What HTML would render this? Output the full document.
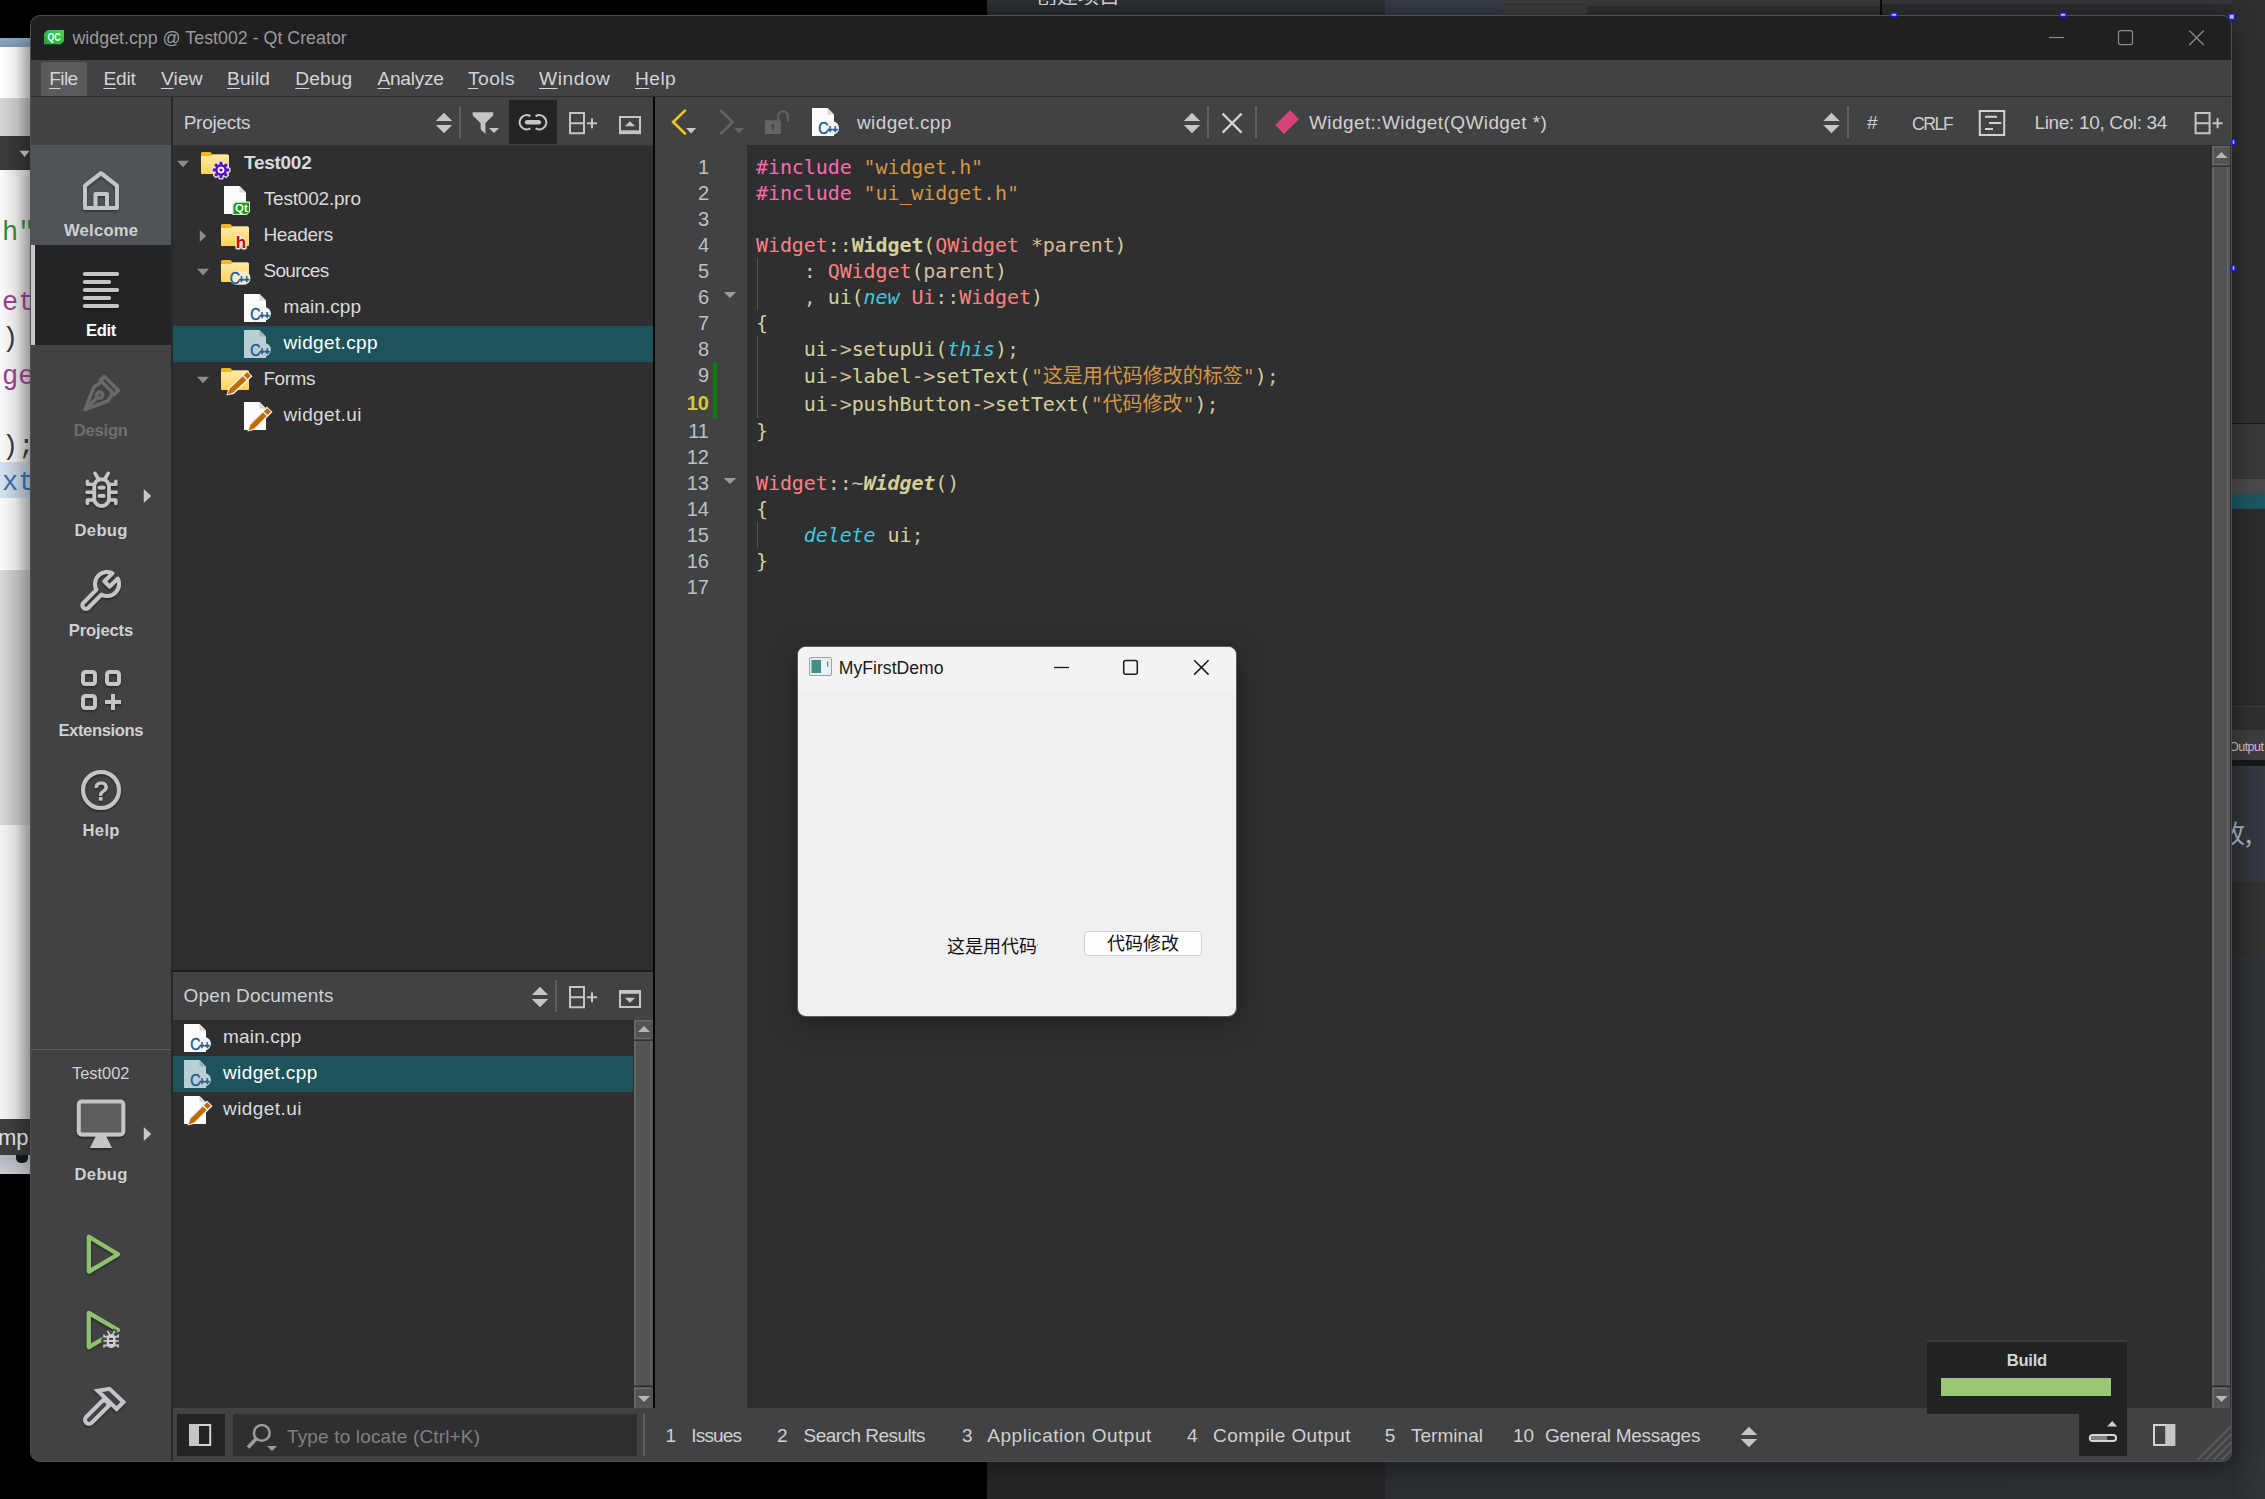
<!DOCTYPE html>
<html lang="en"><head><meta charset="utf-8"><title>widget.cpp @ Test002 - Qt Creator</title>
<style>

html,body{margin:0;padding:0;}
body{width:2265px;height:1499px;overflow:hidden;background:#000;position:relative;font-family:"Liberation Sans","Noto Sans CJK SC",sans-serif;}
div{position:absolute;white-space:nowrap;box-sizing:border-box;}
svg{position:absolute;left:0;top:0;overflow:visible;}
.code{font-family:"DejaVu Sans Mono","Liberation Mono","Noto Sans CJK SC",monospace;font-size:20px;letter-spacing:-0.09px;color:#d6cf9a;white-space:pre;}
.code span.cj{font-family:"Noto Sans CJK SC",sans-serif;letter-spacing:0;}
.kw{color:#45c6d6;font-style:italic;}
.ty{color:#ff8080;}
.pp{color:#ff6aad;}
.st{color:#d69545;}
.pu{color:#d6bb9a;}
.fn{font-weight:bold;}
u{text-decoration:underline;text-underline-offset:3px;text-decoration-thickness:1px;}

</style></head>
<body>
<div style="left:987px;top:0px;width:1278px;height:1499px;background:#2e3032;"></div>
<div style="left:987px;top:0px;width:398px;height:15px;background:linear-gradient(180deg,#2e3136,#25272b);"></div>
<div style="left:1385px;top:0px;width:118px;height:15px;background:linear-gradient(180deg,#373d46,#30353d);"></div>
<div style="left:1503px;top:0px;width:84px;height:15px;background:#3a3b3d;"></div>
<div style="left:1503px;top:4px;width:84px;height:1px;background:#2e2f30;"></div>
<div style="left:1587px;top:0px;width:293px;height:6px;background:#38393b;"></div>
<div style="left:1587px;top:6px;width:293px;height:9px;background:#2c2d2f;"></div>
<div style="left:1880px;top:0px;width:2px;height:15px;background:#0c0c0c;"></div>
<div style="left:1882px;top:0px;width:383px;height:15px;background:#2a2b2d;"></div>
<div style="left:1882px;top:0px;width:383px;height:4px;background:#35363a;"></div>
<div style="left:1036px;top:-17px;height:22px;line-height:22px;font-size:21px;color:#d4d4d4;overflow:hidden;font-family:'Noto Sans CJK SC',sans-serif;">创建项目</div>
<div style="left:987px;top:1461px;width:398px;height:38px;background:#252628;"></div>
<div style="left:1385px;top:1461px;width:880px;height:38px;background:linear-gradient(90deg,#2b2e33,#2c2f33);"></div>
<div style="left:2232px;top:0px;width:33px;height:423px;background:#2d2f31;"></div>
<div style="left:2232px;top:423px;width:33px;height:1px;background:#17181a;"></div>
<div style="left:2232px;top:424px;width:33px;height:55px;background:#36383a;"></div>
<div style="left:2232px;top:479px;width:33px;height:15px;background:#47494b;"></div>
<div style="left:2232px;top:494px;width:33px;height:15px;background:#1d5560;"></div>
<div style="left:2232px;top:509px;width:33px;height:198px;background:#2a2b2d;"></div>
<div style="left:2232px;top:706px;width:33px;height:1px;background:#3c3d3f;"></div>
<div style="left:2232px;top:707px;width:33px;height:23px;background:#2d2e30;"></div>
<div style="left:2232px;top:730px;width:33px;height:30px;background:#3b3d3f;"></div>
<div style="left:2232px;top:760px;width:33px;height:6px;background:#161718;"></div>
<div style="left:2232px;top:766px;width:33px;height:116px;background:linear-gradient(90deg,#2e3237,#363b41);"></div>
<div style="left:2232px;top:882px;width:33px;height:74px;background:linear-gradient(90deg,#2b2b2b,#333333);"></div>
<div style="left:2232px;top:956px;width:33px;height:543px;background:linear-gradient(90deg,#2b2d31,#31353a);"></div>
<div style="left:2229px;top:738.63px;line-height:16px;font-size:12.6px;color:#c4c4c4;letter-spacing:-0.565px;">Output</div>
<div style="left:2220px;top:817.34px;line-height:30px;font-size:25px;color:#a9b4c0;font-family:'Noto Sans CJK SC',sans-serif;">改,</div>
<div style="left:0px;top:38px;width:30px;height:1136px;background:#fff;"></div>
<div style="left:0px;top:38px;width:30px;height:9px;background:linear-gradient(180deg,#8faac8,#7c95b2);"></div>
<div style="left:0px;top:47px;width:30px;height:51px;background:linear-gradient(90deg,#ffffff 0%,#f6f6f6 55%,#c9c9c9 100%);"></div>
<div style="left:0px;top:98px;width:30px;height:38px;background:linear-gradient(90deg,#d6d6d6 0%,#cccccc 55%,#ababab 100%);"></div>
<div style="left:0px;top:136px;width:30px;height:34px;background:linear-gradient(90deg,#3a3b3b,#323333);"></div>
<div style="left:0px;top:170px;width:30px;height:6px;background:linear-gradient(90deg,#ffffff,#d0d0d0);"></div>
<div style="left:0px;top:176px;width:30px;height:394px;background:linear-gradient(90deg,#fbfbfb 0%,#efefef 50%,#c2c2c2 100%);"></div>
<div style="left:0px;top:462px;width:30px;height:36px;background:linear-gradient(90deg,#d6e4f2,#b4c0cc);"></div>
<div style="left:0px;top:570px;width:30px;height:255px;background:linear-gradient(90deg,#d9d9d9,#b4b4b4);"></div>
<div style="left:0px;top:825px;width:30px;height:294px;background:linear-gradient(90deg,#f4f4f4 0%,#e9e9e9 50%,#b8b8b8 100%);"></div>
<div style="left:0px;top:1119px;width:30px;height:36px;background:linear-gradient(90deg,#404142,#37383a);"></div>
<div style="left:0px;top:1155px;width:30px;height:19px;background:linear-gradient(180deg,#aeb6bc,#c9cdd0);"></div>
<div style="left:16px;top:1155px;width:12px;height:8px;background:#15191d;border-radius:0 0 5px 5px;"></div>
<div style="left:2px;top:215.64px;line-height:34px;font-size:27px;color:#3a8a3a;font-family:'Liberation Mono','DejaVu Sans Mono',monospace;">h"</div>
<div style="left:2px;top:285.64px;line-height:34px;font-size:27px;color:#9b3f8f;font-family:'Liberation Mono','DejaVu Sans Mono',monospace;">et</div>
<div style="left:2px;top:321.64px;line-height:34px;font-size:27px;color:#3a3a3a;font-family:'Liberation Mono','DejaVu Sans Mono',monospace;">)</div>
<div style="left:2px;top:359.64px;line-height:34px;font-size:27px;color:#9b3f8f;font-family:'Liberation Mono','DejaVu Sans Mono',monospace;">ge</div>
<div style="left:2px;top:429.64px;line-height:34px;font-size:27px;color:#3a3a3a;font-family:'Liberation Mono','DejaVu Sans Mono',monospace;">);</div>
<div style="left:2px;top:465.64px;line-height:34px;font-size:27px;color:#3c6ea8;font-family:'Liberation Mono','DejaVu Sans Mono',monospace;">xt</div>
<div style="left:-2px;top:1123.98px;line-height:28px;font-size:22px;color:#e4e4e4;">mp</div>
<div style="left:30px;top:15px;width:2202px;height:1447px;background:#404244;border-radius:10px;border:1px solid #4e4f50;box-shadow:0 6px 28px rgba(0,0,0,.38);"></div>
<div style="left:31px;top:16px;width:2200px;height:44px;background:#202020;border-radius:9px 9px 0 0;"></div>
<div style="left:72.5px;top:22.83px;line-height:30px;font-size:17.8px;color:#9b9b9b;letter-spacing:0.016px;">widget.cpp @ Test002 - Qt Creator</div>
<div style="left:31px;top:60px;width:2200px;height:36px;background:#404244;"></div>
<div style="left:31px;top:96px;width:2200px;height:1px;background:#2b2c2d;"></div>
<div style="left:41px;top:62px;width:46px;height:34px;background:#595b5d;"></div>
<div style="left:49.3px;top:64.35px;line-height:30px;font-size:19.2px;color:#d4d4d4;letter-spacing:-0.680px;"><u>F</u>ile</div>
<div style="left:103.4px;top:64.35px;line-height:30px;font-size:19.2px;color:#d4d4d4;letter-spacing:-0.195px;"><u>E</u>dit</div>
<div style="left:161px;top:64.35px;line-height:30px;font-size:19.2px;color:#d4d4d4;letter-spacing:0.110px;"><u>V</u>iew</div>
<div style="left:227px;top:64.35px;line-height:30px;font-size:19.2px;color:#d4d4d4;letter-spacing:0.076px;"><u>B</u>uild</div>
<div style="left:295.3px;top:64.35px;line-height:30px;font-size:19.2px;color:#d4d4d4;letter-spacing:0.105px;"><u>D</u>ebug</div>
<div style="left:377.5px;top:64.35px;line-height:30px;font-size:19.2px;color:#d4d4d4;letter-spacing:-0.301px;"><u>A</u>nalyze</div>
<div style="left:468px;top:64.35px;line-height:30px;font-size:19.2px;color:#d4d4d4;letter-spacing:0.444px;"><u>T</u>ools</div>
<div style="left:539px;top:64.35px;line-height:30px;font-size:19.2px;color:#d4d4d4;letter-spacing:0.542px;"><u>W</u>indow</div>
<div style="left:635px;top:64.35px;line-height:30px;font-size:19.2px;color:#d4d4d4;letter-spacing:0.437px;"><u>H</u>elp</div>
<div style="left:31px;top:97px;width:140px;height:1364px;background:#404244;border-radius:0 0 0 9px;"></div>
<div style="left:31px;top:145px;width:140px;height:100px;background:#515456;"></div>
<div style="left:31px;top:245px;width:140px;height:100px;background:#222425;"></div>
<div style="left:31px;top:245px;width:4px;height:100px;background:#c8c8c8;"></div>
<div style="left:171px;top:97px;width:2px;height:1364px;background:#28292a;"></div>
<div style="left:64px;top:216.25px;line-height:30px;font-size:16.6px;color:#d0d0d0;letter-spacing:0.237px;font-weight:bold;">Welcome</div>
<div style="left:86px;top:316.25px;line-height:30px;font-size:16.6px;color:#ffffff;letter-spacing:-0.318px;font-weight:bold;">Edit</div>
<div style="left:73.8px;top:416.25px;line-height:30px;font-size:16.6px;color:#6e7072;letter-spacing:-0.229px;font-weight:bold;">Design</div>
<div style="left:74.5px;top:516.25px;line-height:30px;font-size:16.6px;color:#d0d0d0;letter-spacing:0.340px;font-weight:bold;">Debug</div>
<div style="left:68.8px;top:616.25px;line-height:30px;font-size:16.6px;color:#d0d0d0;letter-spacing:-0.159px;font-weight:bold;">Projects</div>
<div style="left:58.4px;top:716.25px;line-height:30px;font-size:16.6px;color:#d0d0d0;letter-spacing:-0.374px;font-weight:bold;">Extensions</div>
<div style="left:82.5px;top:816.25px;line-height:30px;font-size:16.6px;color:#d0d0d0;letter-spacing:0.342px;font-weight:bold;">Help</div>
<div style="left:31px;top:1049px;width:140px;height:1px;background:#5c5e60;"></div>
<div style="left:72px;top:1058.32px;line-height:30px;font-size:16.4px;color:#d0d0d0;letter-spacing:0.010px;">Test002</div>
<div style="left:74.5px;top:1160.25px;line-height:30px;font-size:16.6px;color:#d0d0d0;letter-spacing:0.340px;font-weight:bold;">Debug</div>
<div style="left:173px;top:97px;width:481px;height:48px;background:#404244;"></div>
<div style="left:173px;top:145px;width:481px;height:825px;background:#2e2f30;"></div>
<div style="left:173px;top:145px;width:481px;height:1px;background:#353637;"></div>
<div style="left:183.7px;top:108.42px;line-height:30px;font-size:19px;color:#d0d0d0;letter-spacing:-0.248px;">Projects</div>
<div style="left:509px;top:100px;width:48px;height:44px;background:#222425;"></div>
<div style="left:459px;top:106px;width:2px;height:32px;background:#5c5e60;"></div>
<div style="left:173px;top:326px;width:481px;height:36px;background:#1d545c;"></div>
<div style="left:244px;top:148.42px;line-height:30px;font-size:19px;color:#dadada;letter-spacing:-0.277px;font-weight:bold;">Test002</div>
<div style="left:263.8px;top:184.42px;line-height:30px;font-size:19px;color:#dadada;letter-spacing:-0.209px;">Test002.pro</div>
<div style="left:263.4px;top:220.42px;line-height:30px;font-size:19px;color:#dadada;letter-spacing:-0.336px;">Headers</div>
<div style="left:263.4px;top:256.42px;line-height:30px;font-size:19px;color:#dadada;letter-spacing:-0.651px;">Sources</div>
<div style="left:283.5px;top:292.42px;line-height:30px;font-size:19px;color:#dadada;letter-spacing:0.058px;">main.cpp</div>
<div style="left:283.5px;top:328.42px;line-height:30px;font-size:19px;color:#ffffff;letter-spacing:0.352px;">widget.cpp</div>
<div style="left:263.4px;top:364.42px;line-height:30px;font-size:19px;color:#dadada;letter-spacing:-0.457px;">Forms</div>
<div style="left:283.5px;top:400.42px;line-height:30px;font-size:19px;color:#dadada;letter-spacing:0.364px;">widget.ui</div>
<div style="left:173px;top:970px;width:481px;height:2px;background:#1b1c1d;"></div>
<div style="left:173px;top:972px;width:481px;height:48px;background:#404244;"></div>
<div style="left:173px;top:1020px;width:481px;height:388px;background:#2e2f30;"></div>
<div style="left:183.5px;top:981.42px;line-height:30px;font-size:19px;color:#d0d0d0;letter-spacing:0.165px;">Open Documents</div>
<div style="left:555px;top:980px;width:2px;height:32px;background:#5c5e60;"></div>
<div style="left:173px;top:1056px;width:460px;height:36px;background:#1d545c;"></div>
<div style="left:223px;top:1022.42px;line-height:30px;font-size:19px;color:#dadada;letter-spacing:0.172px;">main.cpp</div>
<div style="left:223px;top:1058.42px;line-height:30px;font-size:19px;color:#ffffff;letter-spacing:0.374px;">widget.cpp</div>
<div style="left:223px;top:1094.42px;line-height:30px;font-size:19px;color:#dadada;letter-spacing:0.426px;">widget.ui</div>
<div style="left:653px;top:97px;width:2px;height:1311px;background:#050607;"></div>
<div style="left:173px;top:1408px;width:2058px;height:53px;background:#404244;border-radius:0 0 9px 0;"></div>
<div style="left:177px;top:1414px;width:48px;height:42px;background:#222425;"></div>
<div style="left:233px;top:1414px;width:404px;height:42px;background:#2e2f30;"></div>
<div style="left:643px;top:1414px;width:2px;height:42px;background:#5c5e60;"></div>
<div style="left:287px;top:1422.42px;line-height:30px;font-size:19px;color:#7f8183;letter-spacing:0.157px;">Type to locate (Ctrl+K)</div>
<div style="left:665.5px;top:1421.42px;line-height:30px;font-size:19px;color:#d0d0d0;">1</div>
<div style="left:691.3px;top:1421.42px;line-height:30px;font-size:19px;color:#d0d0d0;letter-spacing:-0.843px;">Issues</div>
<div style="left:777px;top:1421.42px;line-height:30px;font-size:19px;color:#d0d0d0;">2</div>
<div style="left:803.6px;top:1421.42px;line-height:30px;font-size:19px;color:#d0d0d0;letter-spacing:-0.541px;">Search Results</div>
<div style="left:962px;top:1421.42px;line-height:30px;font-size:19px;color:#d0d0d0;">3</div>
<div style="left:987.3px;top:1421.42px;line-height:30px;font-size:19px;color:#d0d0d0;letter-spacing:0.514px;">Application Output</div>
<div style="left:1187px;top:1421.42px;line-height:30px;font-size:19px;color:#d0d0d0;">4</div>
<div style="left:1213px;top:1421.42px;line-height:30px;font-size:19px;color:#d0d0d0;letter-spacing:0.430px;">Compile Output</div>
<div style="left:1384.7px;top:1421.42px;line-height:30px;font-size:19px;color:#d0d0d0;">5</div>
<div style="left:1411px;top:1421.42px;line-height:30px;font-size:19px;color:#d0d0d0;letter-spacing:0.028px;">Terminal</div>
<div style="left:1513px;top:1421.42px;line-height:30px;font-size:19px;color:#d0d0d0;letter-spacing:-0.135px;">10</div>
<div style="left:1545px;top:1421.42px;line-height:30px;font-size:19px;color:#d0d0d0;letter-spacing:-0.271px;">General Messages</div>
<div style="left:655px;top:97px;width:1576px;height:48px;background:#404244;"></div>
<div style="left:655px;top:145px;width:1576px;height:1263px;background:#2e2f30;"></div>
<div style="left:655px;top:145px;width:92px;height:1263px;background:#404244;"></div>
<div style="left:857px;top:108.42px;line-height:30px;font-size:19px;color:#d0d0d0;letter-spacing:0.385px;">widget.cpp</div>
<div style="left:1309px;top:108.42px;line-height:30px;font-size:19px;color:#d0d0d0;letter-spacing:0.406px;">Widget::Widget(QWidget *)</div>
<div style="left:1867px;top:108.42px;line-height:30px;font-size:19px;color:#d0d0d0;">#</div>
<div style="left:1912px;top:108.90px;line-height:30px;font-size:17.6px;color:#d0d0d0;letter-spacing:-1.420px;">CRLF</div>
<div style="left:2034.5px;top:108.42px;line-height:30px;font-size:19px;color:#d0d0d0;letter-spacing:-0.342px;">Line: 10, Col: 34</div>
<div style="left:713px;top:362px;width:4px;height:56px;background:#0f7d0f;"></div>
<div style="left:656px;width:53px;text-align:right;top:152.07px;line-height:30px;font-size:20px;color:#bec0c2;">1</div>
<div style="left:656px;width:53px;text-align:right;top:178.07px;line-height:30px;font-size:20px;color:#bec0c2;">2</div>
<div style="left:656px;width:53px;text-align:right;top:204.07px;line-height:30px;font-size:20px;color:#bec0c2;">3</div>
<div style="left:656px;width:53px;text-align:right;top:230.07px;line-height:30px;font-size:20px;color:#bec0c2;">4</div>
<div style="left:656px;width:53px;text-align:right;top:256.07px;line-height:30px;font-size:20px;color:#bec0c2;">5</div>
<div style="left:656px;width:53px;text-align:right;top:282.07px;line-height:30px;font-size:20px;color:#bec0c2;">6</div>
<div style="left:656px;width:53px;text-align:right;top:308.07px;line-height:30px;font-size:20px;color:#bec0c2;">7</div>
<div style="left:656px;width:53px;text-align:right;top:334.07px;line-height:30px;font-size:20px;color:#bec0c2;">8</div>
<div style="left:656px;width:53px;text-align:right;top:360.07px;line-height:30px;font-size:20px;color:#bec0c2;">9</div>
<div style="left:656px;width:53px;text-align:right;top:388.07px;line-height:30px;font-size:20px;color:#d6c540;font-weight:bold;">10</div>
<div style="left:656px;width:53px;text-align:right;top:416.07px;line-height:30px;font-size:20px;color:#bec0c2;">11</div>
<div style="left:656px;width:53px;text-align:right;top:442.07px;line-height:30px;font-size:20px;color:#bec0c2;">12</div>
<div style="left:656px;width:53px;text-align:right;top:468.07px;line-height:30px;font-size:20px;color:#bec0c2;">13</div>
<div style="left:656px;width:53px;text-align:right;top:494.07px;line-height:30px;font-size:20px;color:#bec0c2;">14</div>
<div style="left:656px;width:53px;text-align:right;top:520.07px;line-height:30px;font-size:20px;color:#bec0c2;">15</div>
<div style="left:656px;width:53px;text-align:right;top:546.07px;line-height:30px;font-size:20px;color:#bec0c2;">16</div>
<div style="left:656px;width:53px;text-align:right;top:572.07px;line-height:30px;font-size:20px;color:#bec0c2;">17</div>
<div class="code" style="left:756px;top:151.57px;line-height:30px;"><span class="pp">#include</span> <span class="st">"widget.h"</span></div>
<div class="code" style="left:756px;top:177.57px;line-height:30px;"><span class="pp">#include</span> <span class="st">"ui_widget.h"</span></div>
<div class="code" style="left:756px;top:229.57px;line-height:30px;"><span class="ty">Widget</span><span class="pu">::</span><span class="fn">Widget</span>(<span class="ty">QWidget</span> <span class="pu">*parent</span>)</div>
<div class="code" style="left:756px;top:255.57px;line-height:30px;">    <span class="pu">:</span> <span class="ty">QWidget</span>(<span class="pu">parent</span>)</div>
<div class="code" style="left:756px;top:281.57px;line-height:30px;">    <span class="pu">,</span> ui(<span class="kw">new</span> <span class="ty">Ui</span><span class="pu">::</span><span class="ty">Widget</span>)</div>
<div class="code" style="left:756px;top:307.57px;line-height:30px;">{</div>
<div class="code" style="left:756px;top:333.57px;line-height:30px;">    ui<span class="pu">-&gt;</span>setupUi(<span class="kw">this</span>)<span class="pu">;</span></div>
<div class="code" style="left:756px;top:359.57px;line-height:30px;">    ui<span class="pu">-&gt;</span>label<span class="pu">-&gt;</span>setText(<span class="st">"<span class="cj">这是用代码修改的标签</span>"</span>)<span class="pu">;</span></div>
<div class="code" style="left:756px;top:387.57px;line-height:30px;">    ui<span class="pu">-&gt;</span>pushButton<span class="pu">-&gt;</span>setText(<span class="st">"<span class="cj">代码修改</span>"</span>)<span class="pu">;</span></div>
<div class="code" style="left:756px;top:415.57px;line-height:30px;">}</div>
<div class="code" style="left:756px;top:467.57px;line-height:30px;"><span class="ty">Widget</span><span class="pu">::~</span><span class="fn" style="font-style:italic">Widget</span>()</div>
<div class="code" style="left:756px;top:493.57px;line-height:30px;">{</div>
<div class="code" style="left:756px;top:519.57px;line-height:30px;">    <span class="kw">delete</span> ui<span class="pu">;</span></div>
<div class="code" style="left:756px;top:545.57px;line-height:30px;">}</div>
<div style="left:757px;top:258px;width:1px;height:52px;background:#525456;"></div>
<div style="left:757px;top:336px;width:1px;height:82px;background:#525456;"></div>
<div style="left:757px;top:522px;width:1px;height:26px;background:#525456;"></div>
<div style="left:1927px;top:1340px;width:200px;height:74px;background:#202223;border-top:2px solid #3a3c3e;"></div>
<div style="left:2079px;top:1414px;width:48px;height:42px;background:#202223;"></div>
<div style="left:1941px;top:1378px;width:170px;height:18px;background:#9bc676;"></div>
<div style="left:2006.8px;top:1346.25px;line-height:30px;font-size:16.6px;color:#d4d4d4;letter-spacing:-0.273px;font-weight:bold;">Build</div>
<div style="left:797px;top:646px;width:440px;height:371px;background:#f0f0f0;border-radius:9px;border:1px solid #5a5a5a;box-shadow:0 6px 30px rgba(0,0,0,.35);overflow:hidden;"><div style="left:0;top:0;width:440px;height:43px;background:#f3f3f3;"></div></div>
<div style="left:838.8px;top:653.40px;line-height:30px;font-size:17.6px;color:#1a1a1a;letter-spacing:0.018px;">MyFirstDemo</div>
<div style="left:947px;top:930px;width:91px;height:30px;overflow:hidden;line-height:30px;font-size:18px;color:#111;font-family:'Noto Sans CJK SC',sans-serif;">这是用代码修改的标签</div>
<div style="left:1084px;top:931px;width:118px;height:25px;background:#fdfdfd;border:1px solid #d0d0d0;border-radius:4px;text-align:center;line-height:20px;font-size:18px;color:#111;font-family:'Noto Sans CJK SC',sans-serif;">代码修改</div>
<svg width="2265" height="1499" viewBox="0 0 2265 1499"><defs><filter id="sh" x="-20%" y="-20%" width="140%" height="150%"><feDropShadow dx="0" dy="1.5" stdDeviation="1.2" flood-color="#000" flood-opacity="0.45"/></filter><linearGradient id="fold" x1="0" y1="0" x2="0" y2="1"><stop offset="0" stop-color="#ffeaa8"/><stop offset="1" stop-color="#ffd257"/></linearGradient><linearGradient id="qc" x1="0" y1="1" x2="1" y2="0"><stop offset="0" stop-color="#1fa832"/><stop offset="1" stop-color="#45d358"/></linearGradient></defs>
<path d="M19.6,150.70000000000002 L29.6,150.70000000000002 L24.6,156.9Z" fill="#a8a8a8"/>
<path d="M47.5,30 H64 V41 L60.8,44.2 H44 V33.5Z" fill="url(#qc)"/>
<text x="54.1" y="41.3" font-family="Liberation Sans,sans-serif" font-weight="bold" font-size="10.5" fill="#fff" text-anchor="middle" textLength="13" lengthAdjust="spacingAndGlyphs">QC</text>
<path d="M2049,37.5 H2064" stroke="#8c8c8c" stroke-width="1.1" fill="none"/>
<rect x="2118.5" y="30.7" width="14" height="14" rx="2.2" stroke="#8c8c8c" stroke-width="1.2" fill="none"/>
<path d="M2189.3,30.5 L2203.8,45 M2203.8,30.5 L2189.3,45" stroke="#8c8c8c" stroke-width="1.2" fill="none"/>
<g filter="url(#sh)">
<path d="M101,173.2 L85,185.6 V208 H117 V185.6Z" fill="none" stroke="#c4c5c6" stroke-width="4" stroke-linejoin="round"/>
<path d="M95.5,208 V194 H107 V208" fill="none" stroke="#c4c5c6" stroke-width="4" stroke-linejoin="round"/>
<path d="M85,274 H117" stroke="#c4c5c6" stroke-width="4.2" stroke-linecap="round"/>
<path d="M85,282 H109" stroke="#c4c5c6" stroke-width="4.2" stroke-linecap="round"/>
<path d="M85,290 H117" stroke="#c4c5c6" stroke-width="4.2" stroke-linecap="round"/>
<path d="M85,298 H109" stroke="#c4c5c6" stroke-width="4.2" stroke-linecap="round"/>
<path d="M85,306 H117" stroke="#c4c5c6" stroke-width="4.2" stroke-linecap="round"/>
<path d="M92.44,499.50 L92.58,500.39 L92.80,501.27 L93.10,502.12 L93.49,502.94 L93.95,503.71 L94.49,504.44 L95.09,505.11 L95.76,505.71 L96.49,506.25 L97.26,506.71 L98.08,507.10 L98.93,507.40 L99.81,507.62 L100.70,507.76 L101.60,507.80 L102.50,507.76 L103.39,507.62 L104.27,507.40 L105.12,507.10 L105.94,506.71 L106.71,506.25 L107.44,505.71 L108.11,505.11 L108.71,504.44 L109.25,503.71 L109.71,502.94 L110.10,502.12 L110.40,501.27 L110.62,500.39 L110.76,499.50 L110.80,498.60 L110.80,486.60 L110.76,485.70 L110.62,484.81 L110.40,483.93 L110.10,483.08 L109.71,482.26 L109.25,481.49 L108.71,480.76 L108.11,480.09 L107.44,479.49 L106.71,478.95 L105.94,478.49 L105.12,478.10 L104.27,477.80 L103.39,477.58 L102.50,477.44 L101.60,477.40 L100.70,477.44 L99.81,477.58 L98.93,477.80 L98.08,478.10 L97.26,478.49 L96.49,478.95 L95.76,479.49 L95.09,480.09 L94.49,480.76 L93.95,481.49 L93.49,482.26 L93.10,483.08 L92.80,483.93 L92.58,484.81 L92.44,485.70 L92.40,486.60 L92.40,498.60ZM96.10,486.69 L96.13,486.06 L96.21,485.53 L96.34,485.00 L96.52,484.50 L96.75,484.01 L97.03,483.55 L97.35,483.11 L97.71,482.71 L98.11,482.35 L98.55,482.03 L99.01,481.75 L99.50,481.52 L100.00,481.34 L100.53,481.21 L101.06,481.13 L101.60,481.10 L102.14,481.13 L102.67,481.21 L103.20,481.34 L103.70,481.52 L104.19,481.75 L104.65,482.03 L105.09,482.35 L105.49,482.71 L105.85,483.11 L106.17,483.55 L106.45,484.01 L106.68,484.50 L106.86,485.00 L106.99,485.53 L107.07,486.06 L107.10,486.69 L107.10,498.51 L107.07,499.14 L106.99,499.67 L106.86,500.20 L106.68,500.70 L106.45,501.19 L106.17,501.65 L105.85,502.09 L105.49,502.49 L105.09,502.85 L104.65,503.17 L104.19,503.45 L103.70,503.68 L103.20,503.86 L102.67,503.99 L102.14,504.07 L101.60,504.10 L101.06,504.07 L100.53,503.99 L100.00,503.86 L99.50,503.68 L99.01,503.45 L98.55,503.17 L98.11,502.85 L97.71,502.49 L97.35,502.09 L97.03,501.65 L96.75,501.19 L96.52,500.70 L96.34,500.20 L96.21,499.67 L96.13,499.14 L96.10,498.51Z" fill="#c4c5c6" fill-rule="evenodd" />
<path d="M99.6,487.6 H103.6" stroke="#c4c5c6" stroke-width="3.8" stroke-linecap="round"/>
<path d="M99.6,495.9 H103.6" stroke="#c4c5c6" stroke-width="3.8" stroke-linecap="round"/>
<path d="M95,473.4 L98.2,478.6 M108.2,473.4 L105,478.6" stroke="#c4c5c6" stroke-width="3.6" stroke-linecap="round"/>
<path d="M87.4,481.2 V484.4 H93 M87,492.3 H93 M87.4,503.6 V500 H93 M115.8,481.2 V484.4 H110 M116.2,492.3 H110 M115.8,503.6 V500 H110" fill="none" stroke="#c4c5c6" stroke-width="3.4" stroke-linecap="round" stroke-linejoin="round"/>
<path d="M94.03,589.27 L81.99,601.43 L81.90,601.53 L81.60,601.87 L81.45,602.08 L81.19,602.46 L81.06,602.69 L80.86,603.10 L80.76,603.34 L80.62,603.78 L80.55,604.03 L80.46,604.48 L80.43,604.74 L80.40,605.20 L80.40,605.46 L80.44,605.91 L80.47,606.17 L80.56,606.62 L80.63,606.87 L80.78,607.31 L80.88,607.55 L81.09,607.96 L81.22,608.18 L81.48,608.56 L81.64,608.77 L81.94,609.11 L82.13,609.30 L82.47,609.60 L82.68,609.75 L83.06,610.01 L83.29,610.14 L83.70,610.34 L83.94,610.44 L84.38,610.58 L84.63,610.65 L85.08,610.74 L85.34,610.77 L85.80,610.80 L86.06,610.80 L86.51,610.76 L86.77,610.73 L87.22,610.64 L87.47,610.57 L87.91,610.42 L88.15,610.32 L88.56,610.11 L88.78,609.98 L89.16,609.72 L89.37,609.56 L89.71,609.26 L89.81,609.17 L101.85,597.01 L102.44,597.23 L102.56,597.28 L103.31,597.50 L103.44,597.54 L104.20,597.72 L104.33,597.74 L105.11,597.87 L105.24,597.89 L106.02,597.96 L106.15,597.97 L106.93,598.00 L107.07,598.00 L107.85,597.97 L107.98,597.96 L108.76,597.89 L108.89,597.87 L109.67,597.74 L109.80,597.72 L110.56,597.54 L110.69,597.50 L111.44,597.28 L111.56,597.23 L112.30,596.96 L112.42,596.91 L113.13,596.58 L113.25,596.53 L113.94,596.16 L114.06,596.09 L114.72,595.68 L114.83,595.60 L115.47,595.15 L115.57,595.07 L116.18,594.57 L116.28,594.48 L116.85,593.95 L116.95,593.85 L117.48,593.28 L117.57,593.18 L118.07,592.57 L118.15,592.47 L118.60,591.83 L118.68,591.72 L119.09,591.06 L119.16,590.94 L119.53,590.25 L119.58,590.13 L119.91,589.42 L119.96,589.30 L120.23,588.56 L120.28,588.44 L120.50,587.69 L120.54,587.56 L120.72,586.80 L120.74,586.67 L120.87,585.89 L120.89,585.76 L120.96,584.98 L120.97,584.85 L121.00,584.07 L121.00,583.93 L120.97,583.15 L120.96,583.02 L120.89,582.24 L120.87,582.11 L120.74,581.33 L120.72,581.20 L120.54,580.44 L120.50,580.31 L120.28,579.56 L120.23,579.44 L119.96,578.70 L119.91,578.58 L119.58,577.87 L119.53,577.75 L119.47,577.65 L119.27,577.34 L119.01,577.07 L118.70,576.86 L118.36,576.70 L118.00,576.62 L117.63,576.60 L117.26,576.64 L116.91,576.76 L116.58,576.94 L116.30,577.18 L109.65,583.82 L107.18,581.35 L113.82,574.70 L114.08,574.38 L114.27,574.02 L114.38,573.62 L114.40,573.20 L114.34,572.79 L114.20,572.41 L113.98,572.06 L113.69,571.76 L113.35,571.53 L113.25,571.47 L113.13,571.42 L112.42,571.09 L112.30,571.04 L111.56,570.77 L111.44,570.72 L110.69,570.50 L110.56,570.46 L109.80,570.28 L109.67,570.26 L108.89,570.13 L108.76,570.11 L107.98,570.04 L107.85,570.03 L107.07,570.00 L106.93,570.00 L106.15,570.03 L106.02,570.04 L105.24,570.11 L105.11,570.13 L104.33,570.26 L104.20,570.28 L103.44,570.46 L103.31,570.50 L102.56,570.72 L102.44,570.77 L101.70,571.04 L101.58,571.09 L100.87,571.42 L100.75,571.47 L100.06,571.84 L99.94,571.91 L99.28,572.32 L99.17,572.40 L98.53,572.85 L98.43,572.93 L97.82,573.43 L97.72,573.52 L97.15,574.05 L97.05,574.15 L96.52,574.72 L96.43,574.82 L95.93,575.43 L95.85,575.53 L95.40,576.17 L95.32,576.28 L94.91,576.94 L94.84,577.06 L94.47,577.75 L94.42,577.87 L94.09,578.58 L94.04,578.70 L93.77,579.44 L93.72,579.56 L93.50,580.31 L93.46,580.44 L93.28,581.20 L93.26,581.33 L93.13,582.11 L93.11,582.24 L93.04,583.02 L93.03,583.15 L93.00,583.93 L93.00,584.07 L93.03,584.85 L93.04,584.98 L93.11,585.76 L93.13,585.89 L93.26,586.67 L93.28,586.80 L93.46,587.56 L93.50,587.69 L93.72,588.44 L93.77,588.56ZM108.71,574.15 L102.93,579.93 L102.69,580.24 L102.50,580.58 L102.39,580.96 L102.35,581.35 L102.39,581.74 L102.50,582.11 L102.69,582.46 L102.93,582.76 L108.24,588.07 L108.54,588.31 L108.89,588.50 L109.26,588.61 L109.65,588.65 L110.04,588.61 L110.42,588.50 L110.76,588.31 L111.07,588.07 L116.85,582.29 L116.91,582.69 L116.98,583.35 L117.00,584.00 L116.98,584.65 L116.91,585.31 L116.81,585.95 L116.66,586.59 L116.47,587.21 L116.24,587.83 L115.97,588.42 L115.66,589.00 L115.31,589.56 L114.93,590.09 L114.52,590.59 L114.07,591.07 L113.59,591.52 L113.09,591.93 L112.56,592.31 L112.00,592.66 L111.42,592.97 L110.83,593.24 L110.21,593.47 L109.59,593.66 L108.95,593.81 L108.31,593.91 L107.65,593.98 L107.00,594.00 L106.35,593.98 L105.69,593.91 L105.05,593.81 L104.41,593.66 L103.79,593.47 L103.17,593.24 L102.58,592.97 L102.36,592.85 L102.02,592.71 L101.66,592.63 L101.30,592.62 L100.94,592.67 L100.59,592.79 L100.27,592.97 L99.99,593.21 L87.01,606.31 L86.82,606.48 L86.65,606.59 L86.48,606.68 L86.29,606.74 L86.10,606.78 L85.91,606.80 L85.71,606.78 L85.52,606.75 L85.33,606.68 L85.16,606.60 L85.00,606.49 L84.85,606.36 L84.72,606.22 L84.61,606.05 L84.52,605.88 L84.46,605.69 L84.42,605.50 L84.40,605.31 L84.42,605.11 L84.45,604.92 L84.52,604.73 L84.60,604.56 L84.71,604.40 L84.88,604.20 L97.86,591.09 L98.13,590.76 L98.31,590.39 L98.42,589.98 L98.44,589.55 L98.36,589.14 L98.20,588.74 L98.03,588.42 L97.76,587.83 L97.53,587.21 L97.34,586.59 L97.19,585.95 L97.09,585.31 L97.02,584.65 L97.00,584.00 L97.02,583.35 L97.09,582.69 L97.19,582.05 L97.34,581.41 L97.53,580.79 L97.76,580.17 L98.03,579.58 L98.34,579.00 L98.69,578.44 L99.07,577.91 L99.48,577.41 L99.93,576.93 L100.41,576.48 L100.91,576.07 L101.44,575.69 L102.00,575.34 L102.58,575.03 L103.17,574.76 L103.79,574.53 L104.41,574.34 L105.05,574.19 L105.69,574.09 L106.35,574.02 L107.00,574.00 L107.65,574.02 L108.31,574.09Z" fill="#c4c5c6" fill-rule="evenodd" />
<rect x="83" y="672" width="12" height="12" rx="2.5" fill="none" stroke="#c4c5c6" stroke-width="4"/>
<rect x="107" y="672" width="12" height="12" rx="2.5" fill="none" stroke="#c4c5c6" stroke-width="4"/>
<rect x="83" y="696" width="12" height="12" rx="2.5" fill="none" stroke="#c4c5c6" stroke-width="4"/>
<path d="M105,702 H121 M113,694 V710" stroke="#c4c5c6" stroke-width="4" stroke-linecap="butt"/>
<circle cx="101" cy="790" r="18" fill="none" stroke="#c4c5c6" stroke-width="4"/>
<text x="101" y="799.6" font-family="Liberation Sans,sans-serif" font-size="25.5" fill="#c4c5c6" stroke="#c4c5c6" stroke-width="1.1" stroke-linejoin="round" text-anchor="middle">?</text>
<rect x="78.8" y="1101.6" width="44.5" height="32.8" rx="3" fill="#5b5d5d" stroke="#c4c5c6" stroke-width="4"/>
<path d="M96,1136 H106 L112,1148 H90Z" fill="#c4c5c6"/>
<path d="M88.9,1236.8 V1271.6 L118.1,1254.2Z" fill="none" stroke="#90c16c" stroke-width="4.2" stroke-linejoin="round"/>
<path d="M88.8,1312.9 V1347.1 L118.1,1330Z" fill="none" stroke="#90c16c" stroke-width="4.2" stroke-linejoin="round"/>
<path d="M106.8,1402 L89,1419.8" stroke="#c4c5c6" stroke-width="12" stroke-linecap="round"/>
<path d="M97.8,1390.8 L109.5,1388.8 L123.4,1402 L116.6,1409Z" fill="#404244" stroke="#c4c5c6" stroke-width="4" stroke-linejoin="miter"/>
<path d="M104.2,1404.6 L89,1419.8" stroke="#404244" stroke-width="4" stroke-linecap="round"/>
</g>
<g transform="translate(111.3,383.5) rotate(45)" fill="none" stroke="#67696b" stroke-width="3.6" stroke-linejoin="round" stroke-linecap="round"><rect x="-10" y="0" width="20" height="5.5"/><path d="M-8,5.5 L-9.8,15 L0,37 L9.8,15 L8,5.5"/><circle cx="0" cy="16.5" r="3"/><path d="M0,20 V35"/></g>
<path d="M143.75,489.0 L151.25,496 L143.75,503.0Z" fill="#c8c8c8"/>
<path d="M143.75,1127.0 L151.25,1134 L143.75,1141.0Z" fill="#c8c8c8"/>
<path d="M105.40,1343.60 L105.40,1343.69 L105.44,1344.26 L105.46,1344.43 L105.57,1344.99 L105.62,1345.16 L105.80,1345.70 L105.87,1345.86 L106.12,1346.37 L106.21,1346.52 L106.53,1347.00 L106.63,1347.14 L107.01,1347.57 L107.13,1347.69 L107.56,1348.07 L107.70,1348.17 L108.18,1348.49 L108.33,1348.58 L108.84,1348.83 L109.00,1348.90 L109.54,1349.08 L109.71,1349.13 L110.27,1349.24 L110.44,1349.26 L111.01,1349.30 L111.19,1349.30 L111.76,1349.26 L111.93,1349.24 L112.49,1349.13 L112.66,1349.08 L113.20,1348.90 L113.36,1348.83 L113.87,1348.58 L114.02,1348.49 L114.50,1348.17 L114.64,1348.07 L115.07,1347.69 L115.19,1347.57 L115.57,1347.14 L115.67,1347.00 L115.99,1346.52 L116.08,1346.37 L116.33,1345.86 L116.40,1345.70 L116.58,1345.16 L116.63,1344.99 L116.74,1344.43 L116.76,1344.26 L116.80,1343.69 L116.80,1343.60 L116.80,1338.40 L116.80,1338.31 L116.76,1337.74 L116.74,1337.57 L116.63,1337.01 L116.58,1336.84 L116.40,1336.30 L116.33,1336.14 L116.08,1335.63 L115.99,1335.48 L115.67,1335.00 L115.57,1334.86 L115.19,1334.43 L115.07,1334.31 L114.64,1333.93 L114.50,1333.83 L114.02,1333.51 L113.87,1333.42 L113.36,1333.17 L113.20,1333.10 L112.66,1332.92 L112.49,1332.87 L111.93,1332.76 L111.76,1332.74 L111.19,1332.70 L111.01,1332.70 L110.44,1332.74 L110.27,1332.76 L109.71,1332.87 L109.54,1332.92 L109.00,1333.10 L108.84,1333.17 L108.33,1333.42 L108.18,1333.51 L107.70,1333.83 L107.56,1333.93 L107.13,1334.31 L107.01,1334.43 L106.63,1334.86 L106.53,1335.00 L106.21,1335.48 L106.12,1335.63 L105.87,1336.14 L105.80,1336.30 L105.62,1336.84 L105.57,1337.01 L105.46,1337.57 L105.44,1337.74 L105.40,1338.31 L105.40,1338.40Z" fill="#404244" fill-rule="evenodd" />
<path d="M104,1334.6 V1336.6 H118.2 V1334.6 M103.4,1341 H118.8 M104,1347.6 V1345.4 H118.2 V1347.6 M107.8,1331.4 L109.6,1334.6 M114.4,1331.4 L112.6,1334.6" fill="none" stroke="#404244" stroke-width="4.2" stroke-linecap="square"/>
<path d="M106.70,1343.60 L106.74,1344.17 L106.85,1344.74 L107.03,1345.28 L107.29,1345.80 L107.61,1346.28 L107.99,1346.71 L108.42,1347.09 L108.90,1347.41 L109.42,1347.67 L109.96,1347.85 L110.53,1347.96 L111.10,1348.00 L111.67,1347.96 L112.24,1347.85 L112.78,1347.67 L113.30,1347.41 L113.78,1347.09 L114.21,1346.71 L114.59,1346.28 L114.91,1345.80 L115.17,1345.28 L115.35,1344.74 L115.46,1344.17 L115.50,1343.60 L115.50,1338.40 L115.46,1337.83 L115.35,1337.26 L115.17,1336.72 L114.91,1336.20 L114.59,1335.72 L114.21,1335.29 L113.78,1334.91 L113.30,1334.59 L112.78,1334.33 L112.24,1334.15 L111.67,1334.04 L111.10,1334.00 L110.53,1334.04 L109.96,1334.15 L109.42,1334.33 L108.90,1334.59 L108.42,1334.91 L107.99,1335.29 L107.61,1335.72 L107.29,1336.20 L107.03,1336.72 L106.85,1337.26 L106.74,1337.83 L106.70,1338.40Z" fill="#cdcdcd" fill-rule="evenodd" />
<path d="M104,1334.6 V1336.6 H118.2 V1334.6 M103.4,1341 H118.8 M104,1347.6 V1345.4 H118.2 V1347.6" fill="none" stroke="#cdcdcd" stroke-width="1.7"/>
<path d="M107.8,1331.4 L109.6,1334.6 M114.4,1331.4 L112.6,1334.6" fill="none" stroke="#cdcdcd" stroke-width="1.7" stroke-linecap="round"/>
<path d="M109.2,1338.8 H113 M109.2,1342.9 H113" stroke="#2a2b2c" stroke-width="1.8"/>
<path d="M177.0,160.8 L189.0,160.8 L183,167.2Z" fill="#8c8d8e"/>
<path d="M202.5,152 H210 L213,154.6 H227.5 Q229,154.6 229,156.1 V172.5 Q229,174 227.5,174 H202.5 Q201,174 201,172.5 V153.5 Q201,152 202.5,152Z" fill="#f5b81c"/>
<path d="M201,156 L211,156 L213.2,154.6 H227.5 Q229,154.6 229,156.1 V172.5 Q229,174 227.5,174 H202.5 Q201,174 201,172.5Z" fill="url(#fold)"/>
<path d="M214.18,167.18 L212.48,167.47 L212.35,167.50 L212.23,167.54 L212.11,167.59 L212.00,167.66 L211.89,167.73 L211.80,167.82 L211.71,167.91 L211.63,168.02 L211.56,168.13 L211.50,168.24 L211.46,168.37 L211.43,168.49 L211.41,168.62 L211.40,168.75 L211.40,171.25 L211.41,171.38 L211.43,171.51 L211.46,171.63 L211.50,171.76 L211.56,171.87 L211.63,171.98 L211.71,172.09 L211.80,172.18 L211.89,172.27 L212.00,172.34 L212.11,172.41 L212.23,172.46 L212.35,172.50 L212.48,172.53 L214.18,172.82 L213.19,174.23 L213.12,174.34 L213.06,174.46 L213.01,174.58 L212.98,174.71 L212.96,174.84 L212.95,174.97 L212.95,175.10 L212.97,175.22 L213.00,175.35 L213.04,175.47 L213.10,175.59 L213.16,175.70 L213.24,175.81 L213.33,175.90 L215.10,177.67 L215.19,177.76 L215.30,177.84 L215.41,177.90 L215.53,177.96 L215.65,178.00 L215.78,178.03 L215.90,178.05 L216.03,178.05 L216.16,178.04 L216.29,178.02 L216.42,177.99 L216.54,177.94 L216.66,177.88 L216.77,177.81 L218.18,176.82 L218.47,178.52 L218.50,178.65 L218.54,178.77 L218.59,178.89 L218.66,179.00 L218.73,179.11 L218.82,179.20 L218.91,179.29 L219.02,179.37 L219.13,179.44 L219.24,179.50 L219.37,179.54 L219.49,179.57 L219.62,179.59 L219.75,179.60 L222.25,179.60 L222.38,179.59 L222.51,179.57 L222.63,179.54 L222.76,179.50 L222.87,179.44 L222.98,179.37 L223.09,179.29 L223.18,179.20 L223.27,179.11 L223.34,179.00 L223.41,178.89 L223.46,178.77 L223.50,178.65 L223.53,178.52 L223.82,176.82 L225.23,177.81 L225.34,177.88 L225.46,177.94 L225.58,177.99 L225.71,178.02 L225.84,178.04 L225.97,178.05 L226.10,178.05 L226.22,178.03 L226.35,178.00 L226.47,177.96 L226.59,177.90 L226.70,177.84 L226.81,177.76 L226.90,177.67 L228.67,175.90 L228.76,175.81 L228.84,175.70 L228.90,175.59 L228.96,175.47 L229.00,175.35 L229.03,175.22 L229.05,175.10 L229.05,174.97 L229.04,174.84 L229.02,174.71 L228.99,174.58 L228.94,174.46 L228.88,174.34 L228.81,174.23 L227.82,172.82 L229.52,172.53 L229.65,172.50 L229.77,172.46 L229.89,172.41 L230.00,172.34 L230.11,172.27 L230.20,172.18 L230.29,172.09 L230.37,171.98 L230.44,171.87 L230.50,171.76 L230.54,171.63 L230.57,171.51 L230.59,171.38 L230.60,171.25 L230.60,168.75 L230.59,168.62 L230.57,168.49 L230.54,168.37 L230.50,168.24 L230.44,168.13 L230.37,168.02 L230.29,167.91 L230.20,167.82 L230.11,167.73 L230.00,167.66 L229.89,167.59 L229.77,167.54 L229.65,167.50 L229.52,167.47 L227.82,167.18 L228.81,165.77 L228.88,165.66 L228.94,165.54 L228.99,165.42 L229.02,165.29 L229.04,165.16 L229.05,165.03 L229.05,164.90 L229.03,164.78 L229.00,164.65 L228.96,164.53 L228.90,164.41 L228.84,164.30 L228.76,164.19 L228.67,164.10 L226.90,162.33 L226.81,162.24 L226.70,162.16 L226.59,162.10 L226.47,162.04 L226.35,162.00 L226.22,161.97 L226.10,161.95 L225.97,161.95 L225.84,161.96 L225.71,161.98 L225.58,162.01 L225.46,162.06 L225.34,162.12 L225.23,162.19 L223.82,163.18 L223.53,161.48 L223.50,161.35 L223.46,161.23 L223.41,161.11 L223.34,161.00 L223.27,160.89 L223.18,160.80 L223.09,160.71 L222.98,160.63 L222.87,160.56 L222.76,160.50 L222.63,160.46 L222.51,160.43 L222.38,160.41 L222.25,160.40 L219.75,160.40 L219.62,160.41 L219.49,160.43 L219.37,160.46 L219.24,160.50 L219.13,160.56 L219.02,160.63 L218.91,160.71 L218.82,160.80 L218.73,160.89 L218.66,161.00 L218.59,161.11 L218.54,161.23 L218.50,161.35 L218.47,161.48 L218.18,163.18 L216.77,162.19 L216.66,162.12 L216.54,162.06 L216.42,162.01 L216.29,161.98 L216.16,161.96 L216.03,161.95 L215.90,161.95 L215.78,161.97 L215.65,162.00 L215.53,162.04 L215.41,162.10 L215.30,162.16 L215.19,162.24 L215.10,162.33 L213.33,164.10 L213.24,164.19 L213.16,164.30 L213.10,164.41 L213.04,164.53 L213.00,164.65 L212.97,164.78 L212.95,164.90 L212.95,165.03 L212.96,165.16 L212.98,165.29 L213.01,165.42 L213.06,165.54 L213.12,165.66 L213.19,165.77Z" fill="#e2e2e2" fill-rule="evenodd" />
<path d="M219.26,164.58 L218.82,164.73 L218.40,164.93 L216.01,163.25 L214.25,165.01 L215.93,167.40 L215.73,167.82 L215.58,168.26 L212.70,168.75 L212.70,171.25 L215.58,171.74 L215.73,172.18 L215.93,172.60 L214.25,174.99 L216.01,176.75 L218.40,175.07 L218.82,175.27 L219.26,175.42 L219.75,178.30 L222.25,178.30 L222.74,175.42 L223.18,175.27 L223.60,175.07 L225.99,176.75 L227.75,174.99 L226.07,172.60 L226.27,172.18 L226.42,171.74 L229.30,171.25 L229.30,168.75 L226.42,168.26 L226.27,167.82 L226.07,167.40 L227.75,165.01 L225.99,163.25 L223.60,164.93 L223.18,164.73 L222.74,164.58 L222.25,161.70 L219.75,161.70ZM224.28,170.32 L224.24,170.64 L224.16,170.96 L224.05,171.26 L223.91,171.56 L223.74,171.83 L223.55,172.09 L223.33,172.33 L223.09,172.55 L222.83,172.74 L222.56,172.91 L222.26,173.05 L221.96,173.16 L221.64,173.24 L221.32,173.28 L221.00,173.30 L220.68,173.28 L220.36,173.24 L220.04,173.16 L219.74,173.05 L219.44,172.91 L219.17,172.74 L218.91,172.55 L218.67,172.33 L218.45,172.09 L218.26,171.83 L218.09,171.56 L217.95,171.26 L217.84,170.96 L217.76,170.64 L217.72,170.32 L217.70,170.00 L217.72,169.68 L217.76,169.36 L217.84,169.04 L217.95,168.74 L218.09,168.44 L218.26,168.17 L218.45,167.91 L218.67,167.67 L218.91,167.45 L219.17,167.26 L219.44,167.09 L219.74,166.95 L220.04,166.84 L220.36,166.76 L220.68,166.72 L221.00,166.70 L221.32,166.72 L221.64,166.76 L221.96,166.84 L222.26,166.95 L222.56,167.09 L222.83,167.26 L223.09,167.45 L223.33,167.67 L223.55,167.91 L223.74,168.17 L223.91,168.44 L224.05,168.74 L224.16,169.04 L224.24,169.36 L224.28,169.68 L224.30,170.00Z" fill="#5a12b8" fill-rule="evenodd" />
<circle cx="221" cy="170" r="3.3" fill="#f4f4f4"/><circle cx="221" cy="170" r="1.6" fill="#5a12b8"/>
<path d="M224,186 H239.5 L246,192.5 V214 H224Z" fill="#fbfbfb"/>
<path d="M239.5,186 V192.5 H246Z" fill="#d9d9d9"/>
<path d="M235.3,201.6 H250 V211.8 L246.8,215 H232.4 V204.5Z" fill="#e4e4e4"/>
<path d="M235.8,202.7 H249 V211.4 L246.4,214 H233.5 V205Z" fill="#179a17"/>
<text x="241.4" y="212.4" font-family="Liberation Sans,sans-serif" font-weight="bold" font-size="11.5" fill="#fff" text-anchor="middle" textLength="12.6" lengthAdjust="spacingAndGlyphs">Qt</text>
<path d="M199.8,230.0 L206.2,236 L199.8,242.0Z" fill="#8c8d8e"/>
<path d="M222.5,224 H230 L233,226.6 H247.5 Q249,226.6 249,228.1 V244.5 Q249,246 247.5,246 H222.5 Q221,246 221,244.5 V225.5 Q221,224 222.5,224Z" fill="#f5b81c"/>
<path d="M221,228 L231,228 L233.2,226.6 H247.5 Q249,226.6 249,228.1 V244.5 Q249,246 247.5,246 H222.5 Q221,246 221,244.5Z" fill="url(#fold)"/>
<text x="241" y="247.5" font-family="Liberation Sans,sans-serif" font-weight="bold" font-size="17" fill="#e8e8e8" stroke="#e8e8e8" stroke-width="3" stroke-linejoin="round" text-anchor="middle">h</text>
<text x="241" y="247.5" font-family="Liberation Sans,sans-serif" font-weight="bold" font-size="17" fill="#d40000" text-anchor="middle">h</text>
<path d="M197.0,268.8 L209.0,268.8 L203,275.2Z" fill="#8c8d8e"/>
<path d="M222.5,260 H230 L233,262.6 H247.5 Q249,262.6 249,264.1 V280.5 Q249,282 247.5,282 H222.5 Q221,282 221,280.5 V261.5 Q221,260 222.5,260Z" fill="#f5b81c"/>
<path d="M221,264 L231,264 L233.2,262.6 H247.5 Q249,262.6 249,264.1 V280.5 Q249,282 247.5,282 H222.5 Q221,282 221,280.5Z" fill="url(#fold)"/>
<rect x="229.5" y="271.3" width="21" height="13.4" rx="6.7" fill="#f6eed2"/>
<text x="229.7" y="283.8" font-family="Liberation Sans,sans-serif" font-size="16.6" fill="#1f5a8c" stroke="#1f5a8c" stroke-width="0.5" textLength="10.2" lengthAdjust="spacingAndGlyphs">C</text>
<text x="238.7" y="283.2" font-family="Liberation Sans,sans-serif" font-weight="bold" font-size="10.8" fill="#1f5a8c" stroke="#1f5a8c" stroke-width="0.5" textLength="10.6" lengthAdjust="spacingAndGlyphs">++</text>
<path d="M244,294 H259.5 L266,300.5 V322 H244Z" fill="#fbfbfb"/>
<path d="M259.5,294 V300.5 H266Z" fill="#d9d9d9"/>
<rect x="250" y="307" width="21" height="13.4" rx="6.7" fill="#f4f4f4"/>
<text x="250.2" y="319.5" font-family="Liberation Sans,sans-serif" font-size="16.6" fill="#1f5a8c" stroke="#1f5a8c" stroke-width="0.5" textLength="10.2" lengthAdjust="spacingAndGlyphs">C</text>
<text x="259.2" y="318.9" font-family="Liberation Sans,sans-serif" font-weight="bold" font-size="10.8" fill="#1f5a8c" stroke="#1f5a8c" stroke-width="0.5" textLength="10.6" lengthAdjust="spacingAndGlyphs">++</text>
<path d="M244,330 H259.5 L266,336.5 V358 H244Z" fill="#bacfd4"/>
<path d="M259.5,330 V336.5 H266Z" fill="#9ab2b8"/>
<rect x="250" y="343" width="21" height="13.4" rx="6.7" fill="#bacfd4"/>
<text x="250.2" y="355.5" font-family="Liberation Sans,sans-serif" font-size="16.6" fill="#1f5a8c" stroke="#1f5a8c" stroke-width="0.5" textLength="10.2" lengthAdjust="spacingAndGlyphs">C</text>
<text x="259.2" y="354.9" font-family="Liberation Sans,sans-serif" font-weight="bold" font-size="10.8" fill="#1f5a8c" stroke="#1f5a8c" stroke-width="0.5" textLength="10.6" lengthAdjust="spacingAndGlyphs">++</text>
<path d="M197.0,376.8 L209.0,376.8 L203,383.2Z" fill="#8c8d8e"/>
<path d="M222.5,368 H230 L233,370.6 H247.5 Q249,370.6 249,372.1 V388.5 Q249,390 247.5,390 H222.5 Q221,390 221,388.5 V369.5 Q221,368 222.5,368Z" fill="#f5b81c"/>
<path d="M221,372 L231,372 L233.2,370.6 H247.5 Q249,370.6 249,372.1 V388.5 Q249,390 247.5,390 H222.5 Q221,390 221,388.5Z" fill="url(#fold)"/>
<g transform="translate(227.5,394.5) rotate(-43.64)"><path d="M-1.5,0 L5,-4 H30.706901555025897 V4 H5Z" fill="#f2f2f2"/><path d="M0,0 L5.5,-2.6 H23.706901555025897 V2.6 H5.5Z" fill="#c06a00"/><rect x="25.1069015550259" y="-2.6" width="4.6" height="5.2" fill="#c06a00"/></g>
<path d="M244,402 H259.5 L266,408.5 V430 H244Z" fill="#fbfbfb"/>
<path d="M259.5,402 V408.5 H266Z" fill="#d9d9d9"/>
<g transform="translate(248.5,430.5) rotate(-45.00)"><path d="M-1.5,0 L5,-4 H29.991378028648448 V4 H5Z" fill="#f2f2f2"/><path d="M0,0 L5.5,-2.6 H22.991378028648448 V2.6 H5.5Z" fill="#c06a00"/><rect x="24.391378028648447" y="-2.6" width="4.6" height="5.2" fill="#c06a00"/></g>
<path d="M184,1024 H199.5 L206,1030.5 V1052 H184Z" fill="#fbfbfb"/>
<path d="M199.5,1024 V1030.5 H206Z" fill="#d9d9d9"/>
<rect x="190" y="1037" width="21" height="13.4" rx="6.7" fill="#f4f4f4"/>
<text x="190.2" y="1049.5" font-family="Liberation Sans,sans-serif" font-size="16.6" fill="#1f5a8c" stroke="#1f5a8c" stroke-width="0.5" textLength="10.2" lengthAdjust="spacingAndGlyphs">C</text>
<text x="199.2" y="1048.9" font-family="Liberation Sans,sans-serif" font-weight="bold" font-size="10.8" fill="#1f5a8c" stroke="#1f5a8c" stroke-width="0.5" textLength="10.6" lengthAdjust="spacingAndGlyphs">++</text>
<path d="M184,1060 H199.5 L206,1066.5 V1088 H184Z" fill="#bacfd4"/>
<path d="M199.5,1060 V1066.5 H206Z" fill="#9ab2b8"/>
<rect x="190" y="1073" width="21" height="13.4" rx="6.7" fill="#bacfd4"/>
<text x="190.2" y="1085.5" font-family="Liberation Sans,sans-serif" font-size="16.6" fill="#1f5a8c" stroke="#1f5a8c" stroke-width="0.5" textLength="10.2" lengthAdjust="spacingAndGlyphs">C</text>
<text x="199.2" y="1084.9" font-family="Liberation Sans,sans-serif" font-weight="bold" font-size="10.8" fill="#1f5a8c" stroke="#1f5a8c" stroke-width="0.5" textLength="10.6" lengthAdjust="spacingAndGlyphs">++</text>
<path d="M184,1096 H199.5 L206,1102.5 V1124 H184Z" fill="#fbfbfb"/>
<path d="M199.5,1096 V1102.5 H206Z" fill="#d9d9d9"/>
<g transform="translate(188.5,1124.5) rotate(-45.00)"><path d="M-1.5,0 L5,-4 H29.991378028648448 V4 H5Z" fill="#f2f2f2"/><path d="M0,0 L5.5,-2.6 H22.991378028648448 V2.6 H5.5Z" fill="#c06a00"/><rect x="24.391378028648447" y="-2.6" width="4.6" height="5.2" fill="#c06a00"/></g>
<path d="M812,108 H827.5 L834,114.5 V136 H812Z" fill="#fbfbfb"/>
<path d="M827.5,108 V114.5 H834Z" fill="#d9d9d9"/>
<rect x="818" y="121.3" width="21" height="13.4" rx="6.7" fill="#f4f4f4"/>
<text x="818.2" y="133.8" font-family="Liberation Sans,sans-serif" font-size="16.6" fill="#1f5a8c" stroke="#1f5a8c" stroke-width="0.5" textLength="10.2" lengthAdjust="spacingAndGlyphs">C</text>
<text x="827.2" y="133.2" font-family="Liberation Sans,sans-serif" font-weight="bold" font-size="10.8" fill="#1f5a8c" stroke="#1f5a8c" stroke-width="0.5" textLength="10.6" lengthAdjust="spacingAndGlyphs">++</text>
<path d="M435.8,121 L452.2,121 L444,112.7Z M435.8,125 L452.2,125 L444,133.3Z" fill="#c4c5c6"/>
<path d="M472.7,112.2 H493.2 V115.5 L485.4,123 V134 L480.6,129.2 V123 L472.7,115.5Z" fill="#c4c5c6"/>
<path d="M489.0,128.0 L499.0,128.0 L494,133.0Z" fill="#c4c5c6"/>
<path d="M530.4,116.2 A7.1,7.1 0 1 0 530.4,128.4 M535.6,116.2 A7.1,7.1 0 1 1 535.6,128.4" fill="none" stroke="#c4c5c6" stroke-width="2.2"/>
<path d="M527.2,122.2 H538.8" stroke="#c4c5c6" stroke-width="4.6" stroke-linecap="round"/>
<path d="M570,113 H584 V133.3 H570Z M570,123.2 H584" fill="none" stroke="#c4c5c6" stroke-width="2"/>
<path d="M587,123.2 H597 M592,118.2 V128.2" stroke="#c4c5c6" stroke-width="2" fill="none"/>
<path d="M620,131 V117 H640 V131" fill="none" stroke="#c4c5c6" stroke-width="2"/><rect x="619" y="130.3" width="22" height="3.8" fill="#c4c5c6"/>
<path d="M624.8,126.3 L635.2,126.3 L630,121.3Z" fill="#c4c5c6"/>
<path d="M531.8,995 L548.2,995 L540,986.7Z M531.8,999 L548.2,999 L540,1007.3Z" fill="#c4c5c6"/>
<path d="M570,987 H584 V1007.3 H570Z M570,997.2 H584" fill="none" stroke="#c4c5c6" stroke-width="2"/>
<path d="M587,997.2 H597 M592,992.2 V1002.2" stroke="#c4c5c6" stroke-width="2" fill="none"/>
<path d="M620,993 V1007 H640 V993" fill="none" stroke="#c4c5c6" stroke-width="2"/><rect x="619" y="990" width="22" height="3.8" fill="#c4c5c6"/>
<path d="M624.8,997.7 L635.2,997.7 L630,1002.7Z" fill="#c4c5c6"/>
<path d="M685,110.6 L673.2,122 L685,133.6" fill="none" stroke="#f0c41c" stroke-width="2.7" stroke-linecap="round" stroke-linejoin="miter"/>
<path d="M686.0,127.99999999999999 L696.2,127.99999999999999 L691.1,133.39999999999998Z" fill="#c8c8c8"/>
<path d="M721,110.6 L732.6,122 L721,133.6" fill="none" stroke="#626466" stroke-width="2.7" stroke-linecap="round"/>
<path d="M734.0,127.99999999999999 L744.0,127.99999999999999 L739,133.39999999999998Z" fill="#626466"/>
<rect x="765" y="120.3" width="16" height="13.7" fill="#626466"/><path d="M778.2,120.5 V116 A4.8,4.8 0 0 1 787.8,116 V121.6" fill="none" stroke="#626466" stroke-width="2"/>
<circle cx="772.8" cy="125.8" r="1.7" fill="#404244"/><rect x="772" y="126" width="1.6" height="4.4" fill="#404244"/>
<path d="M1183.8,121 L1200.2,121 L1192,112.7Z M1183.8,125 L1200.2,125 L1192,133.3Z" fill="#c4c5c6"/>
<rect x="1207" y="106" width="2" height="32" fill="#626466"/><rect x="1255" y="106" width="2" height="32" fill="#626466"/><rect x="1847" y="106" width="2" height="32" fill="#626466"/>
<path d="M1222.6,113.6 L1241.6,132.6 M1241.6,113.6 L1222.6,132.6" stroke="#d2d2d2" stroke-width="2.3" fill="none"/>
<path d="M1290.2,110.1 L1299,119.2 L1283.9,134.1 L1275.2,125Z" fill="#d6437a"/>
<path d="M1823.3,121 L1839.7,121 L1831.5,112.7Z M1823.3,125 L1839.7,125 L1831.5,133.3Z" fill="#c4c5c6"/>
<rect x="1979.8" y="111" width="24.4" height="24" fill="none" stroke="#d2d2d2" stroke-width="2"/>
<path d="M1985,116.8 H1997 M1989,122.9 H2001.3 M1985,129.1 H1993" stroke="#d2d2d2" stroke-width="2" fill="none"/>
<path d="M2195.6,113 H2209.6 V133.3 H2195.6Z M2195.6,123.2 H2209.6" fill="none" stroke="#c4c5c6" stroke-width="2"/>
<path d="M2212.6,123.2 H2222.6 M2217.6,118.2 V128.2" stroke="#c4c5c6" stroke-width="2" fill="none"/>
<path d="M723.8,291.9 L736.2,291.9 L730,298.1Z" fill="#9a9b9c"/>
<path d="M723.8,477.9 L736.2,477.9 L730,484.1Z" fill="#9a9b9c"/>
<rect x="190" y="1425" width="20.2" height="20" fill="none" stroke="#d4d4d4" stroke-width="2"/><rect x="189" y="1424" width="10" height="22" fill="#c4c5c6"/>
<circle cx="261.8" cy="1432.9" r="7.9" fill="none" stroke="#9c9d9e" stroke-width="2.5"/><path d="M256.2,1438.8 L248,1447.6" stroke="#9c9d9e" stroke-width="3.6" fill="none"/>
<path d="M267.0,1446.0 L277.0,1446.0 L272,1451.0Z" fill="#9c9d9e"/>
<path d="M1740.8,1435 L1757.2,1435 L1749,1426.7Z M1740.8,1439 L1757.2,1439 L1749,1447.3Z" fill="#c4c5c6"/>
<path d="M2107.2,1426.4 L2117.2,1426.4 L2112.2,1421.0Z" fill="#d0d0d0"/>
<rect x="2089.8" y="1434.9" width="26.3" height="6.2" rx="3.1" fill="#2a2c2d" stroke="#d8d8d8" stroke-width="2"/><rect x="2091" y="1436" width="16.2" height="4" fill="#808284"/>
<rect x="2154" y="1425" width="20.2" height="20" fill="none" stroke="#d4d4d4" stroke-width="2"/><rect x="2165.2" y="1424" width="10" height="22" fill="#c4c5c6"/>
<g stroke="#5b5d5f" stroke-width="1.8" clip-path="inset(0)"><path d="M2197.6,1459.8 L2231,1426.4 M2205.6,1459.8 L2231,1434.4 M2213.6,1459.8 L2231,1442.4 M2221.6,1459.8 L2231,1450.4"/></g>
<rect x="634" y="1020" width="19" height="388" fill="#525355"/>
<rect x="634" y="1020" width="19" height="1.5" fill="#68696b"/><rect x="634" y="1020" width="2" height="388" fill="#656668"/><rect x="650" y="1041" width="1.5" height="346" fill="#656668"/>
<rect x="634" y="1039.3" width="19" height="1.6" fill="#2e2f30"/><rect x="634" y="1385.4" width="19" height="2" fill="#2e2f30"/><rect x="634" y="1387.4" width="17" height="1.6" fill="#68696b"/>
<rect x="634" y="1037.6" width="17" height="1.6" fill="#68696b"/>
<path d="M638.0,1032.0 L650.0,1032.0 L644.0,1026.0Z" fill="#b4b5b5"/>
<path d="M638.0,1396.0 L650.0,1396.0 L644.0,1402.0Z" fill="#b4b5b5"/>
<rect x="2212" y="146" width="18" height="1262" fill="#525355"/>
<rect x="2212" y="146" width="18" height="1.5" fill="#68696b"/><rect x="2212" y="146" width="2" height="1262" fill="#656668"/><rect x="2227" y="167" width="1.5" height="1220" fill="#656668"/>
<rect x="2212" y="165.3" width="18" height="1.6" fill="#2e2f30"/><rect x="2212" y="1385.4" width="18" height="2" fill="#2e2f30"/><rect x="2212" y="1387.4" width="16" height="1.6" fill="#68696b"/>
<rect x="2212" y="163.6" width="16" height="1.6" fill="#68696b"/>
<path d="M2215.5,158.0 L2227.5,158.0 L2221.5,152.0Z" fill="#b4b5b5"/>
<path d="M2215.5,1396.0 L2227.5,1396.0 L2221.5,1402.0Z" fill="#b4b5b5"/>
<rect x="809.5" y="657.5" width="22" height="18" rx="1.5" fill="#e8eef0" stroke="#9aa4aa" stroke-width="1"/><rect x="811.5" y="660" width="9.5" height="13" fill="#3f8f86"/><rect x="822" y="660" width="7.5" height="13" fill="#eef2f2"/><rect x="827" y="661.5" width="1.3" height="5" fill="#3f8f86"/>
<path d="M1054,667.5 H1069" stroke="#1a1a1a" stroke-width="1.3"/>
<rect x="1123.7" y="660.6" width="13.6" height="13.6" rx="2" fill="none" stroke="#1a1a1a" stroke-width="1.5"/>
<path d="M1194.2,660.2 L1208.6,674.6 M1208.6,660.2 L1194.2,674.6" stroke="#1a1a1a" stroke-width="1.5"/>
<rect x="1891" y="13" width="6" height="3.5" fill="#b8b8c8" stroke="#1818e0" stroke-width="1.4"/>
<rect x="2060" y="13" width="6" height="3.5" fill="#b8b8c8" stroke="#1818e0" stroke-width="1.4"/>
<rect x="2229" y="14" width="5.5" height="5.5" fill="#b8b8c8" stroke="#1818e0" stroke-width="1.4"/>
<rect x="2232" y="139.5" width="3" height="5" fill="#b8b8c8" stroke="#1818e0" stroke-width="1.4"/>
<rect x="2232" y="265.5" width="3" height="5" fill="#b8b8c8" stroke="#1818e0" stroke-width="1.4"/></svg>
</body></html>
